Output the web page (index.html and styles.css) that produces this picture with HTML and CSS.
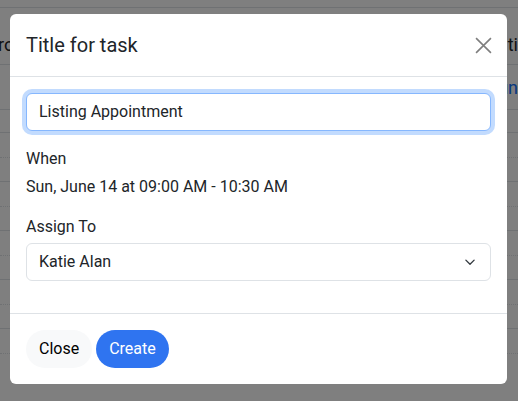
FILE: index.html
```html
<!DOCTYPE html>
<html lang="en">
<head>
<meta charset="UTF-8">
<meta name="viewport" content="width=device-width, initial-scale=1.0">
<title>Title for task</title>
<link rel="stylesheet" href="styles.css">
</head>
<body>

<div id="page">
    <div class="row row-head">
        <span>ro</span>
        <span>ti</span>
    </div>
    <div class="row row-first">
        <span></span>
        <span class="link">un</span>
    </div>
    <div class="row row-thin"></div>
    <div class="row"><div class="dots"></div></div>
    <div class="row"><div class="dots"></div></div>
    <div class="row"><div class="dots"></div></div>
    <div class="row"><div class="dots"></div></div>
    <div class="row"><div class="dots"></div></div>
</div>

<div id="backdrop">
    <div class="modal">
        <div class="modal-header">
            <h5 class="modal-title">Title for task</h5>
            <button class="btn-close" aria-label="Close">
                <svg width="17" height="17" viewBox="0 0 16 16">
                    <path d="M1 1 L15 15 M15 1 L1 15" stroke="#000" stroke-width="1.5" fill="none"/>
                </svg>
            </button>
        </div>

        <div class="modal-body">
            <input class="form-control focused" type="text" value="Listing Appointment">

            <div class="field">
                <div class="label">When</div>
                <div>Sun, June 14 at 09:00 AM - 10:30 AM</div>
            </div>

            <div class="field">
                <div class="label">Assign To</div>
                <div class="form-select">
                    <span>Katie Alan</span>
                    <svg width="12" height="12" viewBox="0 0 16 16">
                        <path d="M2.5 5.5 L8 11 L13.5 5.5" stroke="#343a40" stroke-width="1.8" fill="none" stroke-linecap="round" stroke-linejoin="round"/>
                    </svg>
                </div>
            </div>
        </div>

        <div class="modal-footer">
            <button class="btn btn-light">Close</button>
            <button class="btn btn-primary">Create</button>
        </div>
    </div>
</div>

</body>
</html>
```

FILE: styles.css
```css
/* page under the dialog */
body {
  margin: 0;
  background-color: #ffffff;
  font-family: Roboto, "Liberation Sans", sans-serif;
  font-size: 16px;
  line-height: 1.5;
  color: #212529;
  overflow: hidden;
}
#page {
  padding-top: 7px;
}
.row {
  height: 48px;
  border-top: 1px solid #dee2e6;
  display: flex;
  justify-content: space-between;
  align-items: center;
  position: relative;
}
.row-head {
  height: 57px;
  font-size: 18px;
  align-items: flex-end;
  padding-bottom: 6px;
  box-sizing: border-box;
}
.row-head span:first-child {
  margin-left: -2px;
}
.row-first {
  height: 44px;
  font-size: 18px;
}
.row-thin {
  height: 22px;
}
.link {
  color: #0d6efd;
}
.dots {
  width: 100%;
  margin-top: 0;
  border-top: 1px dotted #dee2e6;
}

/* dialog */
#backdrop {
  position: fixed;
  top: 0;
  left: 0;
  right: 0;
  bottom: 0;
  background-color: rgba(0, 0, 0, 0.5);
  padding: 14px 0 0 10px;
}
.modal {
  width: 497px;
  background-color: #ffffff;
  border-radius: 6px;
}
.modal-header {
  display: flex;
  align-items: center;
  justify-content: space-between;
  padding: 16px 15px 16px 16px;
  border-bottom: 1px solid #dee2e6;
}
.modal-title {
  margin: 0;
  font-size: 20px;
  font-weight: 400;
  line-height: 1.5;
}
.btn-close {
  border: 0;
  background: none;
  padding: 0;
  width: 17px;
  height: 17px;
  opacity: 0.5;
  display: flex;
}
.modal-body {
  padding: 16px;
  display: flex;
  flex-direction: column;
  gap: 16px;
}
.form-control {
  font-family: inherit;
  font-size: 16px;
  line-height: 1.5;
  color: #212529;
  padding: 6px 12px;
  border: 1px solid #dee2e6;
  border-radius: 6px;
  margin: 0;
  outline: none;
}
.focused {
  border-color: #86b7fe;
  box-shadow: 0 0 0 4px rgba(13, 110, 253, 0.25);
}
.label {
  margin-bottom: 4px;
}
.form-select {
  display: flex;
  align-items: center;
  justify-content: space-between;
  padding: 6px 14px 6px 12px;
  border: 1px solid #dee2e6;
  border-radius: 6px;
  margin-bottom: 16px;
}
.modal-footer {
  display: flex;
  gap: 4px;
  padding: 16px 16px;
  border-top: 1px solid #dee2e6;
}
.btn {
  font-family: inherit;
  font-size: 16px;
  line-height: 1.5;
  padding: 7px 13px;
  border: 0;
  border-radius: 19px;
}
.btn-light {
  background-color: #f8f9fa;
  color: #000000;
}
.btn-primary {
  background-color: #2f74f0;
  color: #ffffff;
}
```
